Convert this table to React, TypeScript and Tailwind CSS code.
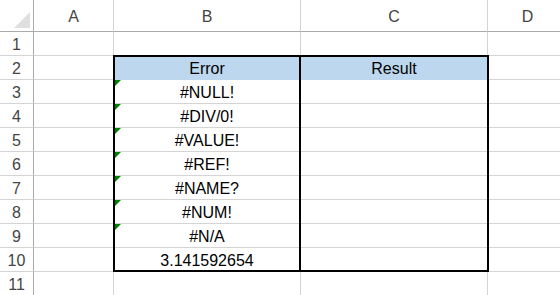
import React from "react";

const errors = ["#NULL!", "#DIV/0!", "#VALUE!", "#REF!", "#NAME?", "#NUM!", "#N/A"];

const cols = ["A", "B", "C", "D"];

const Cell = ({
  children,
  className = "",
  flag = false,
}: {
  children?: React.ReactNode;
  className?: string;
  flag?: boolean;
}) => (
  <div
    className={
      "relative flex items-center justify-center border-r border-b border-[#d4d4d4] pt-[2px] " +
      className
    }
  >
    {flag && (
      <div className="absolute left-0 top-0 h-0 w-0 border-t-[7px] border-r-[7px] border-t-[#008000] border-r-transparent" />
    )}
    {children}
  </div>
);

const App = () => {
  const rows = Array.from({ length: 11 }, (_, i) => i + 1);

  const cellFor = (r: number, c: string) => {
    if (c === "B" && r === 2) return <Cell className="bg-[#bdd7ee] border-b-[#bdd7ee]">Error</Cell>;
    if (c === "C" && r === 2) return <Cell className="bg-[#bdd7ee] border-b-[#bdd7ee]">Result</Cell>;
    if (c === "B" && r >= 3 && r <= 9)
      return <Cell flag>{errors[r - 3]}</Cell>;
    if (c === "B" && r === 10) return <Cell>3.141592654</Cell>;
    return <Cell />;
  };

  return (
    <div
      className="relative w-[560px] h-[295px] overflow-hidden bg-white text-[16px] text-black"
      style={{ fontFamily: '"Liberation Sans", Arial, sans-serif' }}
    >
      <div className="grid grid-cols-[34px_80px_187px_187px_80px] grid-rows-[32px_repeat(11,24px)]">
        {/* corner */}
        <div className="relative border-r border-b border-[#ababab]">
          <div className="absolute left-[14px] top-[12px] h-0 w-0 border-b-[16px] border-l-[16px] border-b-[#dfdfdf] border-l-transparent" />
        </div>
        {cols.map((c) => (
          <div
            key={c}
            className="flex items-center justify-center border-r border-b border-[#d4d4d4] border-b-[#ababab] pt-[2px] text-[#444444]"
          >
            {c}
          </div>
        ))}
        {rows.map((r) => (
          <React.Fragment key={r}>
            <div className="flex items-center justify-center border-r border-b border-[#d4d4d4] border-r-[#ababab] pt-[2px] text-[#444444]">
              {r}
            </div>
            {cols.map((c) => (
              <React.Fragment key={c}>{cellFor(r, c)}</React.Fragment>
            ))}
          </React.Fragment>
        ))}
      </div>
      {/* table outline over B2:C10 */}
      <div className="pointer-events-none absolute left-[113px] top-[55px] h-[217px] w-[376px] border-2 border-black" />
      <div className="pointer-events-none absolute left-[299px] top-[55px] h-[217px] w-[2px] bg-black" />
    </div>
  );
};

export default App;
